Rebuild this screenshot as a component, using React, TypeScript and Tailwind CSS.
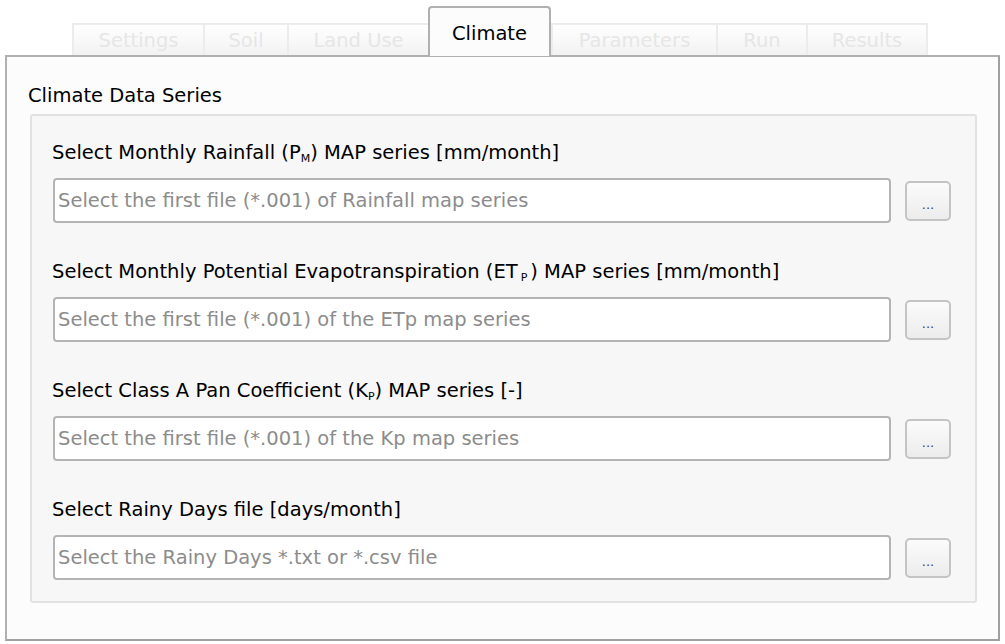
const tabs = ["Settings", "Soil", "Land Use", "Climate", "Parameters", "Run", "Results"];
const tabWidths: Record<string, string> = {
  Settings: "w-[131px]",
  Soil: "w-[84px]",
  "Land Use": "w-[141px]",
  Climate: "w-[123px]",
  Parameters: "w-[165px]",
  Run: "w-[90px]",
  Results: "w-[120px]",
};

const FileRow = ({ label, placeholder }: { label: React.ReactNode; placeholder: string }) => {
  return (
    <div className="flex flex-col">
      <div className="h-[24px] leading-[24px] text-black whitespace-nowrap">{label}</div>
      <div className="mt-[13px] flex items-center">
        <input
          readOnly
          placeholder={placeholder}
          className="h-[45px] w-[838px] ml-[1px] rounded-[4px] border-2 border-[#b4b4b4] bg-white px-[3px] text-[19.5px] text-black placeholder:text-[#8c8c8c] outline-none"
        />
        <button className="ml-[14px] h-[40px] w-[46px] rounded-[5px] border-2 border-[#c4c4c4] bg-gradient-to-b from-[#fbfbfb] to-[#ececec] text-[13px] leading-none text-[#4a4060] flex items-end justify-center pb-[8px]">
          ...
        </button>
      </div>
    </div>
  );
};

const App = () => {
  return (
    <div className="w-[1005px] h-[644px] bg-white font-['DejaVu_Sans',sans-serif] text-[19.5px] flex flex-col overflow-hidden">
      <div className="flex pl-[72px] h-[55px] items-end">
        {tabs.map((t) => {
          const active = t === "Climate";
          return active ? (
            <div
              key={t}
              className={`${tabWidths[t]} h-[50px] -mb-[1px] z-10 rounded-t-[4px] border-2 border-b-0 border-[#b0b0b0] bg-[#fcfcfc] flex justify-center pt-[11px] text-black`}
            >
              {t}
            </div>
          ) : (
            <div
              key={t}
              className={`${tabWidths[t]} h-[32px] border-l-2 border-t-2 border-[#ececec] bg-gradient-to-b from-white to-[#f2f2f2] flex justify-center pt-[1px] text-[#e6e6e6]`}
            >
              {t}
            </div>
          );
        })}
        <div className="w-[4px] h-[32px] border-l-2 border-[#ececec]" />
      </div>
      <div className="ml-[5px] w-[995px] h-[586px] border-2 border-t-2 border-[#b0b0b0] border-r-[#a0a0a0] border-b-[#a0a0a0] bg-[#fcfcfc] pl-[23px] pr-[21px] pt-[27px]">
        <div className="leading-[24px] -ml-[2px] text-black">Climate Data Series</div>
        <div className="mt-[6px] h-[489px] border-2 border-[#e2e2e2] rounded-[3px] bg-[#f7f7f7] pl-[20px] pt-[25px] flex flex-col gap-[37px]">
          <FileRow
            label={
              <>
                Select Monthly Rainfall (P<sub className="text-[11px] align-baseline relative top-[3px]">M</sub>) MAP series [mm/month]
              </>
            }
            placeholder="Select the first file (*.001) of Rainfall map series"
          />
          <FileRow
            label={
              <>
                Select Monthly Potential Evapotranspiration (ET<sub className="text-[11px] align-baseline relative top-[3px] mx-[3px]">P</sub>) MAP series [mm/month]
              </>
            }
            placeholder="Select the first file (*.001) of the ETp map series"
          />
          <FileRow
            label={
              <>
                Select Class A Pan Coefficient (K<sub className="text-[11px] align-baseline relative top-[3px]">P</sub>) MAP series [-]
              </>
            }
            placeholder="Select the first file (*.001) of the Kp map series"
          />
          <FileRow label="Select Rainy Days file [days/month]" placeholder="Select the Rainy Days *.txt or *.csv file" />
        </div>
      </div>
    </div>
  );
};

export default App;
